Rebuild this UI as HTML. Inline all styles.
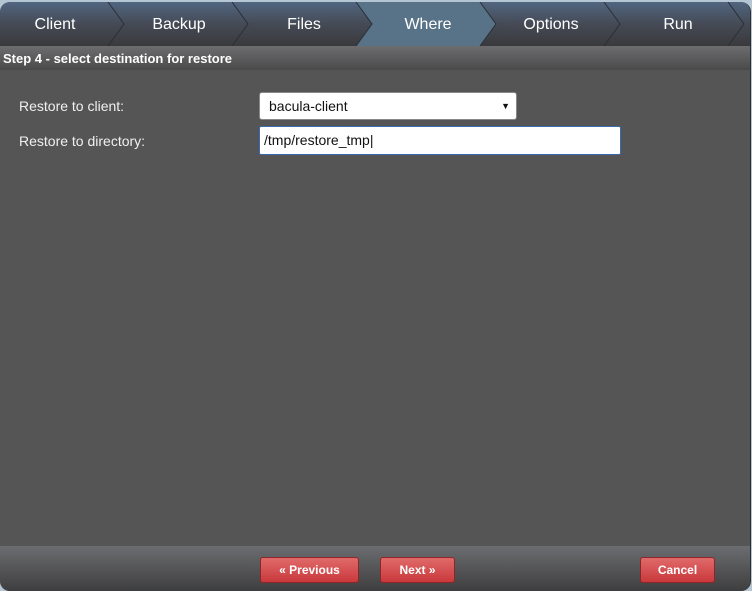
<!DOCTYPE html>
<html><head><style>
html,body{margin:0;padding:0;}
body{width:752px;height:591px;background:#b4c6d3;position:relative;overflow:hidden;font-family:"Liberation Sans",sans-serif;}
#frame{position:absolute;left:0;top:2px;width:750px;height:589px;background:#555;border-radius:10px 10px 10px 10px;overflow:hidden;border-right:1px solid #2e2e2e;}
#tabs{position:absolute;left:0;top:0;width:750px;height:44px;}
#hdr{position:absolute;left:0;top:44px;width:750px;height:24px;background:linear-gradient(#6d6d6f,#4a4a4b);color:#fff;font-weight:bold;font-size:13px;line-height:25px;padding-left:3px;box-sizing:border-box;}
.lbl{position:absolute;left:19px;color:#f0f0f0;font-size:14px;}
#sel{position:absolute;left:259px;top:90px;width:258px;height:28px;background:#fff;border:1px solid #888;border-radius:3px;box-sizing:border-box;font-size:14px;line-height:27px;padding-left:9px;color:#111;}
#sel span{position:absolute;right:6px;top:0;font-size:9px;}
#inp{position:absolute;left:259px;top:124px;width:362px;height:29px;background:#fff;border:1px solid #3b69b0;border-radius:2px;box-sizing:border-box;font-size:14px;line-height:27px;padding-left:4px;color:#111;}
#foot{position:absolute;left:0;top:544px;width:750px;height:45px;background:linear-gradient(#6c6d70,#3e3e3f);}
.btn{position:absolute;top:11px;height:26px;background:linear-gradient(#e06a6a,#c9393b);border:1px solid #8e2528;border-radius:3px;box-sizing:border-box;color:#fff;font-weight:bold;font-size:12px;line-height:24px;text-align:center;}
</style></head><body>
<div id="frame">
<svg id="tabs" width="750" height="44" viewBox="0 0 750 44">
<defs><linearGradient id="g" x1="0" y1="0" x2="0" y2="1"><stop offset="0" stop-color="#516680"/><stop offset="0.5" stop-color="#454a55"/><stop offset="1" stop-color="#3a3a3c"/></linearGradient></defs>
<rect x="0" y="0" width="750" height="44" fill="url(#g)"/>
<polygon points="356,0 480,0 496,22 480,44 356,44 372,22" fill="#587388"/>
<g stroke="#2a2e36" stroke-width="1" fill="none">
<polyline points="108,0 124,22 108,44"/>
<polyline points="232,0 248,22 232,44"/>
<polyline points="356,0 372,22 356,44"/>
<polyline points="480,0 496,22 480,44"/>
<polyline points="604,0 620,22 604,44"/>
<polyline points="728,0 744,22 728,44"/>
</g>
<g fill="#fff" font-family="Liberation Sans,sans-serif" font-size="16" text-anchor="middle">
<text x="55" y="27">Client</text>
<text x="179" y="27">Backup</text>
<text x="304" y="27">Files</text>
<text x="428" y="27">Where</text>
<text x="551" y="27">Options</text>
<text x="678" y="27">Run</text>
</g>
</svg>
<div id="hdr">Step 4 - select destination for restore</div>
<div class="lbl" style="top:96px">Restore to client:</div>
<div class="lbl" style="top:131px">Restore to directory:</div>
<div id="sel">bacula-client<span>▼</span></div>
<div id="inp">/tmp/restore_tmp|</div>
<div id="foot">
<div class="btn" style="left:260px;width:99px">« Previous</div>
<div class="btn" style="left:380px;width:75px">Next »</div>
<div class="btn" style="left:640px;width:75px">Cancel</div>
</div>
</div>
</body></html>
